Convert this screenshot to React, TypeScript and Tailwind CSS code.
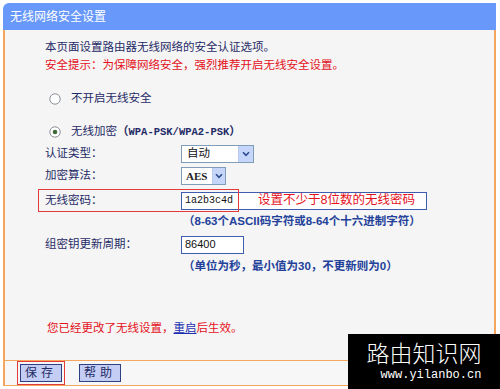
const CJK = "font-['Liberation_Sans','Noto_Sans_CJK_SC',sans-serif]";

function Radio({ checked }: { checked?: boolean }) {
  return (
    <svg width="12" height="12" viewBox="0 0 12 12" className="shrink-0" aria-hidden="true">
      <circle cx="6" cy="6" r="5.2" fill="#ffffff" stroke="#8a8f9a" strokeWidth="1" />
      {checked && <circle cx="6" cy="6" r="2.3" fill="#3f6b3a" />}
    </svg>
  );
}

function Chevron() {
  return (
    <svg width="8" height="6" viewBox="0 0 8 6" aria-hidden="true">
      <path d="M1 1.2 4 4.4 7 1.2" fill="none" stroke="#2e4d8f" strokeWidth="1.6" />
    </svg>
  );
}

function Row({ label, children, className = "" }: { label: string; children: React.ReactNode; className?: string }) {
  return (
    <div className={`flex items-center ${className}`}>
      <span className="w-[136px] shrink-0 text-[11.5px] text-[#1f2b66]">{label}</span>
      {children}
    </div>
  );
}

export default function App() {
  return (
    <div className={`relative h-[389px] w-[500px] overflow-hidden bg-white ${CJK}`}>
      <div className="ml-[3px] mt-[3px] w-[493px]">
        <div className="flex h-[27px] items-center rounded-tl-[6px] bg-[#6898f9] pl-[7px] text-[12px] text-white">
          无线网络安全设置
        </div>

        <div className="flex h-[330px] flex-col border-x-2 border-[#f5a65e] bg-[#f5f5f5] pl-[40px] pt-[8px]">
          <p className="h-[18px] leading-[18px] text-[11.5px] text-[#1f2b66]">
            本页面设置路由器无线网络的安全认证选项。
          </p>
          <p className="h-[18px] leading-[18px] text-[11.5px] text-[#e4111b]">
            安全提示：为保障网络安全，强烈推荐开启无线安全设置。
          </p>

          <div className="mt-[15px] flex h-[20px] items-center pl-[4px]">
            <Radio />
            <span className="ml-[10px] text-[11.5px] text-[#1f2b66]">不开启无线安全</span>
          </div>

          <div className="mt-[13px] flex h-[20px] items-center pl-[4px]">
            <Radio checked />
            <span className="ml-[10px] text-[11.5px] text-[#1f2b66]">
              无线加密
              <span className="font-bold">（</span>
              <span className="font-['Liberation_Mono',monospace] text-[10.5px] font-bold">WPA-PSK/WPA2-PSK</span>
              <span className="font-bold">）</span>
            </span>
          </div>

          <Row label="认证类型：" className="mt-[2px] h-[20px]">
            <div className="flex h-[18px] w-[73px] items-stretch border border-[#7f9db9] bg-white">
              <span className="flex flex-1 items-center pl-[5px] text-[11.5px] text-[#111]">自动</span>
              <span className="flex w-[15px] items-center justify-center border-l border-[#b9c9ef] bg-[#c6d6fb]">
                <Chevron />
              </span>
            </div>
          </Row>

          <Row label="加密算法：" className="mt-[2px] h-[20px]">
            <div className="flex h-[18px] w-[45px] items-stretch border border-[#7f9db9] bg-white">
              <span className="flex flex-1 items-center pl-[4px] font-['Liberation_Serif',serif] text-[11px] font-bold text-[#222]">
                AES
              </span>
              <span className="flex w-[13px] items-center justify-center border-l border-[#b9c9ef] bg-[#c6d6fb]">
                <Chevron />
              </span>
            </div>
          </Row>

          <Row label="无线密码：" className="relative mt-[3px] h-[23px]">
            <div className="flex h-[18px] w-[246px] items-center border border-[#3f5cae] bg-white pl-[3px]">
              <span className="w-[70px] font-['Liberation_Mono',monospace] text-[10px] text-[#111]">1a2b3c4d</span>
              <span className="ml-[3px] text-[12.5px] text-[#e4111b]">设置不少于8位数的无线密码</span>
            </div>
            <div className="absolute left-[-7px] top-0 h-[23px] w-[201px] border border-[#e33a3a]" />
          </Row>

          <p className="ml-[138px] h-[18px] leading-[18px] text-[11.5px] font-bold text-[#23419a]">
            （8-63个ASCII码字符或8-64个十六进制字符）
          </p>

          <Row label="组密钥更新周期：" className="mt-[5px] h-[19px]">
            <div className="flex h-[18px] w-[63px] items-center border border-[#3f5cae] bg-white pl-[3px] text-[11px] text-[#111]">
              86400
            </div>
          </Row>

          <p className="ml-[138px] mt-[3px] h-[18px] leading-[18px] text-[11.5px] font-bold text-[#23419a]">
            （单位为秒，最小值为30，不更新则为0）
          </p>

          <p className="ml-[2px] mt-[44px] h-[18px] leading-[18px] text-[11.5px] text-[#e4111b]">
            您已经更改了无线设置，
            <span className="text-[#1a2fb0] underline">重启</span>
            后生效。
          </p>
        </div>

        <div className="flex h-[26px] items-center gap-[14px] border-x-2 border-y border-[#f5a65e] bg-[#f7f7f7] pl-[12px]">
          <div className="border border-[#e33a3a] p-[2px]">
            <button className="flex h-[18px] w-[42px] items-center justify-center border border-[#2f3f7f] bg-[#c4cdf3] text-[12px] tracking-[4px] text-[#1f2b66]">
              保存
            </button>
          </div>
          <button className="flex h-[18px] w-[42px] items-center justify-center border border-[#2f3f7f] bg-[#c4cdf3] text-[12px] tracking-[4px] text-[#1f2b66]">
            帮助
          </button>
        </div>
      </div>

      <div className="absolute bottom-0 right-0 flex h-[55px] w-[152px] flex-col items-center bg-black">
        <span className="mt-[5px] font-['Noto_Sans_CJK_SC',sans-serif] text-[23px] font-light leading-[26px] text-white">
          路由知识网
        </span>
        <span className="ml-[14px] mt-[3px] font-['Liberation_Mono',monospace] text-[12px] leading-[14px] text-white">
          www.yilanbo.cn
        </span>
      </div>
    </div>
  );
}
